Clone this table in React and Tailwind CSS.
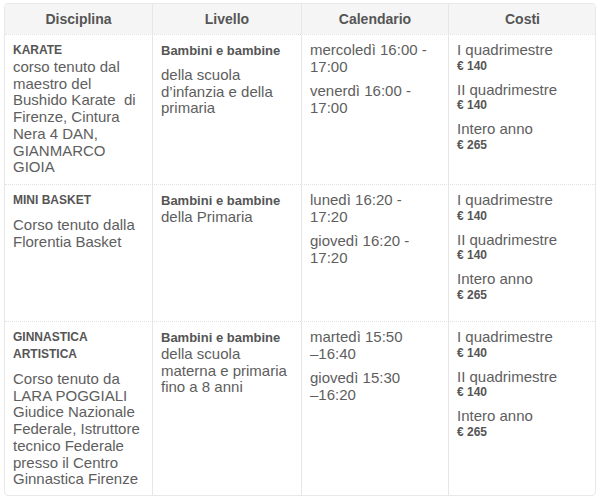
import React from "react";

const Lines = ({ lines, className = "" }) => (
  <p className={className}>
    {lines.map((l, i) => (
      <React.Fragment key={i}>
        {i > 0 && <br />}
        {l}
      </React.Fragment>
    ))}
  </p>
);

const Title = ({ lines, big }) => (
  <Lines lines={lines} className={(big ? "text-[13px] " : "text-[12px] ") + "font-bold leading-[17px] text-[#555]"} />
);
const Body = ({ lines, className = "" }) => (
  <Lines lines={lines} className={"text-[15px] leading-[16.7px] text-[#5e5e5e] " + className} />
);
const Price = ({ label, value }) => (
  <div className="mb-[8px]">
    <p className="text-[15px] leading-[16.7px] text-[#5e5e5e]">{label}</p>
    <p className="text-[12px] font-bold leading-[15px] text-[#555]">{value}</p>
  </div>
);

const Costi = () => (
  <div>
    <Price label="I quadrimestre" value="€ 140" />
    <Price label="II quadrimestre" value="€ 140" />
    <Price label="Intero anno" value="€ 265" />
  </div>
);

const Cell = ({ children, last, className = "" }) => (
  <div className={"px-[8px] pt-[7px] " + (last ? "" : "border-r border-[#e6e6e6] ") + className}>
    {children}
  </div>
);

const rowCls = "grid grid-cols-[148px_149px_147px_147px] border-t border-dotted border-[#e2e2e2]";

export default function App() {
  return (
    <div className="w-[600px] h-[498px] bg-white pl-[4px] pt-[3px]" style={{ fontFamily: '"Liberation Sans", Arial, Helvetica, sans-serif' }}>
      <div className="w-[592px] border border-[#e8e8e8] rounded-[4px] overflow-hidden">
        <div className="grid grid-cols-[148px_149px_147px_147px] bg-[#f5f5f5] h-[30px] text-[14px] font-bold text-[#555]">
          <div className="flex items-center justify-center border-r border-[#e6e6e6]">Disciplina</div>
          <div className="flex items-center justify-center border-r border-[#e6e6e6]">Livello</div>
          <div className="flex items-center justify-center border-r border-[#e6e6e6]">Calendario</div>
          <div className="flex items-center justify-center">Costi</div>
        </div>

        <div className={rowCls + " h-[150px]"}>
          <Cell>
            <Title lines={["KARATE"]} />
            <Body lines={["corso tenuto dal", "maestro del", "Bushido Karate  di", "Firenze, Cintura", "Nera 4 DAN,", "GIANMARCO", "GIOIA"]} className="whitespace-pre" />
          </Cell>
          <Cell>
            <Title big lines={["Bambini e bambine"]} />
            <Body lines={["della scuola", "d’infanzia e della", "primaria"]} className="mt-[8px]" />
          </Cell>
          <Cell>
            <Body lines={["mercoledì 16:00 -", "17:00"]} />
            <Body lines={["venerdì 16:00 -", "17:00"]} className="mt-[8px]" />
          </Cell>
          <Cell last>
            <Costi />
          </Cell>
        </div>

        <div className={rowCls + " h-[137px]"}>
          <Cell>
            <Title lines={["MINI BASKET"]} />
            <Body lines={["Corso tenuto dalla", "Florentia Basket"]} className="mt-[8px]" />
          </Cell>
          <Cell>
            <Title big lines={["Bambini e bambine"]} />
            <Body lines={["della Primaria"]} />
          </Cell>
          <Cell>
            <Body lines={["lunedì 16:20 -", "17:20"]} />
            <Body lines={["giovedì 16:20 -", "17:20"]} className="mt-[8px]" />
          </Cell>
          <Cell last>
            <Costi />
          </Cell>
        </div>

        <div className={rowCls + " h-[174px]"}>
          <Cell>
            <Title lines={["GINNASTICA", "ARTISTICA"]} />
            <Body lines={["Corso tenuto da", "LARA POGGIALI", "Giudice Nazionale", "Federale, Istruttore", "tecnico Federale", "presso il Centro", "Ginnastica Firenze"]} className="mt-[8px]" />
          </Cell>
          <Cell>
            <Title big lines={["Bambini e bambine"]} />
            <Body lines={["della scuola", "materna e primaria", "fino a 8 anni"]} />
          </Cell>
          <Cell>
            <Body lines={["martedì 15:50", "–16:40"]} />
            <Body lines={["giovedì 15:30", "–16:20"]} className="mt-[8px]" />
          </Cell>
          <Cell last>
            <Costi />
          </Cell>
        </div>
      </div>
    </div>
  );
}
